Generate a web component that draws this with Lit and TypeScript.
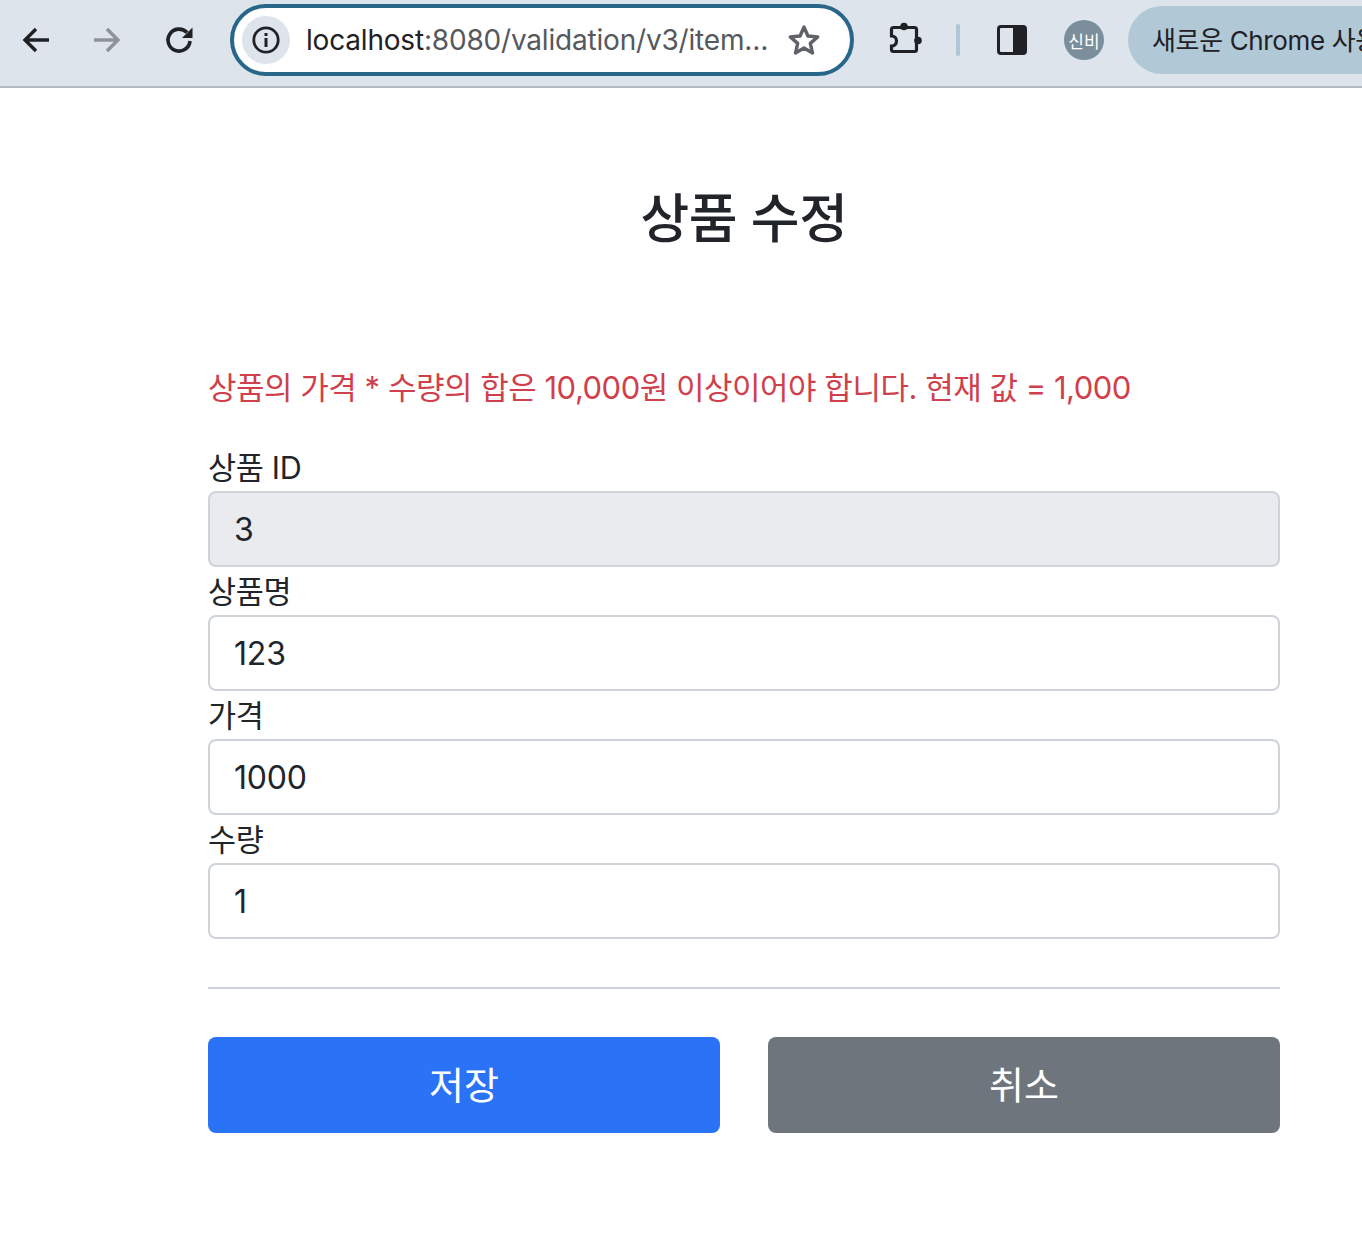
import { LitElement, html, css, svg } from "lit";
import { customElement } from "lit/decorators.js";

@customElement("app-root")
export class AppRoot extends LitElement {
  static styles = css`
    :host { display: block; height: 1252px; background: #fff; overflow: hidden;
      font-family: Inter, "Noto Sans CJK KR", sans-serif; color: #212529; }
    * { box-sizing: border-box; }
    .bar { height: 88px; background: #dde4ec; border-bottom: 2px solid #b4bbc2; display: flex; align-items: center; overflow: hidden; position: relative; }
    .ic { flex: none; display: block; }
    .back { margin-left: 20px; }
    .fwd { margin-left: 38px; }
    .reload { margin-left: 38px; }
    .omni { flex: none; margin-left: 34px; width: 624px; height: 72px; border: 4px solid #28668a; border-radius: 36px; background: #fff; display: flex; align-items: center; padding-left: 8px; margin-top: -7px; }
    .bar > .ic, .bar > .sep, .bar > .avatar { margin-top: -6px; }
    .info { width: 48px; height: 48px; border-radius: 50%; background: #dde4ec; display: flex; align-items: center; justify-content: center; flex: none; }
    .url { margin-left: 16px; width: 464px; font-size: 28px; letter-spacing: -0.19px; color: #55585c; white-space: nowrap; }
    .url b { font-weight: 400; color: #1f2125; }
    .star { margin-left: 17px; }
    .ext { margin-left: 33px; }
    .sep { width: 4px; height: 32px; background: #afc6d6; border-radius: 2px; margin-left: 33px; flex: none; }
    .panel { margin-left: 37px; }
    .avatar { width: 40px; height: 40px; border-radius: 50%; background: #7b8e9b; color: #fff; font-size: 17px; display: flex; align-items: center; justify-content: center; margin-left: 37px; flex: none; }
    .pill { flex: none; margin-left: 24px; margin-top: -7px; width: 300px; height: 68px; border-radius: 34px 0 0 34px; background: #b1c8d7; padding: 0 0 2px 24px; font-size: 26px; letter-spacing: -0.35px; display: flex; align-items: center; white-space: nowrap; overflow: hidden; color: #1f2125; }

    .page { width: 1072px; margin-left: 208px; }
    h2 { margin: 0; padding-top: 97px; height: 245px; text-align: center; font-size: 53px; line-height: 68px; font-weight: 500; letter-spacing: -0.4px; color: #212529; }
    .err { height: 48px; line-height: 50px; margin-top: 30px; font-size: 31px; letter-spacing: -0.49px; color: #d03f4c; white-space: nowrap; }
    .form { margin-top: 32px; display: flex; flex-direction: column; }
    label { display: block; height: 48px; line-height: 50px; font-size: 30.5px; letter-spacing: -0.3px; color: #212529; }
    .input { height: 76px; border: 2px solid #ced4da; border-radius: 8px; padding: 1px 24px 0; display: flex; align-items: center; font-size: 32px; color: #212529; background: #fff; letter-spacing: -0.2px; }
    .input.dis { background: #e9ebef; }
    hr { margin: 48px 0 0; border: 0; border-top: 2px solid #ced4da; height: 2px; }
    .btns { margin-top: 48px; display: grid; grid-template-columns: 1fr 1fr; gap: 48px; }
    .btn { height: 96px; border-radius: 8px; display: flex; align-items: center; justify-content: center; font-size: 38px; color: #fff; padding-bottom: 6px; }
    .primary { background: #2a72f6; }
    .secondary { background: #6f757d; }
  `;

  private icon(cls: string, size: number, body: unknown, vb = "0 0 40 40") {
    return html`<svg class="ic ${cls}" width=${size} height=${size} viewBox=${vb} fill="none">${body}</svg>`;
  }

  render() {
    return html`
      <div class="bar">
        ${this.icon("back", 32, svg`<path d="M28 16H5M15 5 4 16l11 11" transform="translate(1 0)" stroke="#1f2125" stroke-width="3.4"/>`, "0 0 32 32")}
        ${this.icon("fwd", 32, svg`<path d="M4 16h23M17 5l11 11-11 11" stroke="#8e9296" stroke-width="3.4"/>`, "0 0 32 32")}
        ${this.icon("reload", 36, svg`<path d="M27 10.500A11 11 0 1 0 30 19" stroke="#1f2125" stroke-width="3.6"/><path d="M32.500 5.500v10.500H22z" fill="#1f2125"/>`, "0 0 36 36")}
        <div class="omni">
          <div class="info">
            <svg width="30" height="30" viewBox="0 0 30 30" fill="none"><circle cx="15" cy="15" r="12.2" stroke="#1f2125" stroke-width="2.8"/><rect x="13.5" y="13" width="3" height="9" fill="#1f2125"/><rect x="13.5" y="8" width="3" height="3" fill="#1f2125"/></svg>
          </div>
          <div class="url"><b>localhost</b>:8080/validation/v3/item…</div>
          ${this.icon("star", 34, svg`<path d="M17 4l3.900 9 9.800.9-7.400 6.500 2.200 9.600L17 25l-8.500 5 2.200-9.600-7.400-6.500 9.800-.9z" stroke="#5f6368" stroke-width="3.4" stroke-linejoin="round"/>`, "0 0 34 34")}
        </div>
        ${this.icon("ext", 36, svg`<path d="M6.500 5.500H27.500a2 2 0 0 1 2 2V27.500a2 2 0 0 1-2 2H6.500a2 2 0 0 1-2-2V24c3 0 5-2 5-5s-2-5-5-5V7.500a2 2 0 0 1 2-2z" stroke="#1f2125" stroke-width="3.2"/><circle cx="17" cy="4.500" r="3.800" fill="#1f2125"/><circle cx="31" cy="18.500" r="3.800" fill="#1f2125"/>`, "0 0 36 36")}
        <div class="sep"></div>
        ${this.icon("panel", 30, svg`<rect x="1.500" y="1.500" width="27" height="27" rx="2.500" stroke="#1f2125" stroke-width="3"/><path d="M16 1.500h10.500a2 2 0 0 1 2 2v23a2 2 0 0 1-2 2H16z" fill="#1f2125"/>`, "0 0 30 30")}
        <div class="avatar">신비</div>
        <div class="pill">새로운 Chrome 사용 가능</div>
      </div>
      <div class="page">
        <h2>상품 수정</h2>
        <div class="err">상품의 가격 * 수량의 합은 10,000원 이상이어야 합니다. 현재 값 = 1,000</div>
        <div class="form">
          <label>상품 ID</label><div class="input dis">3</div>
          <label>상품명</label><div class="input">123</div>
          <label>가격</label><div class="input">1000</div>
          <label>수량</label><div class="input">1</div>
        </div>
        <hr />
        <div class="btns">
          <div class="btn primary">저장</div>
          <div class="btn secondary">취소</div>
        </div>
      </div>
    `;
  }
}
